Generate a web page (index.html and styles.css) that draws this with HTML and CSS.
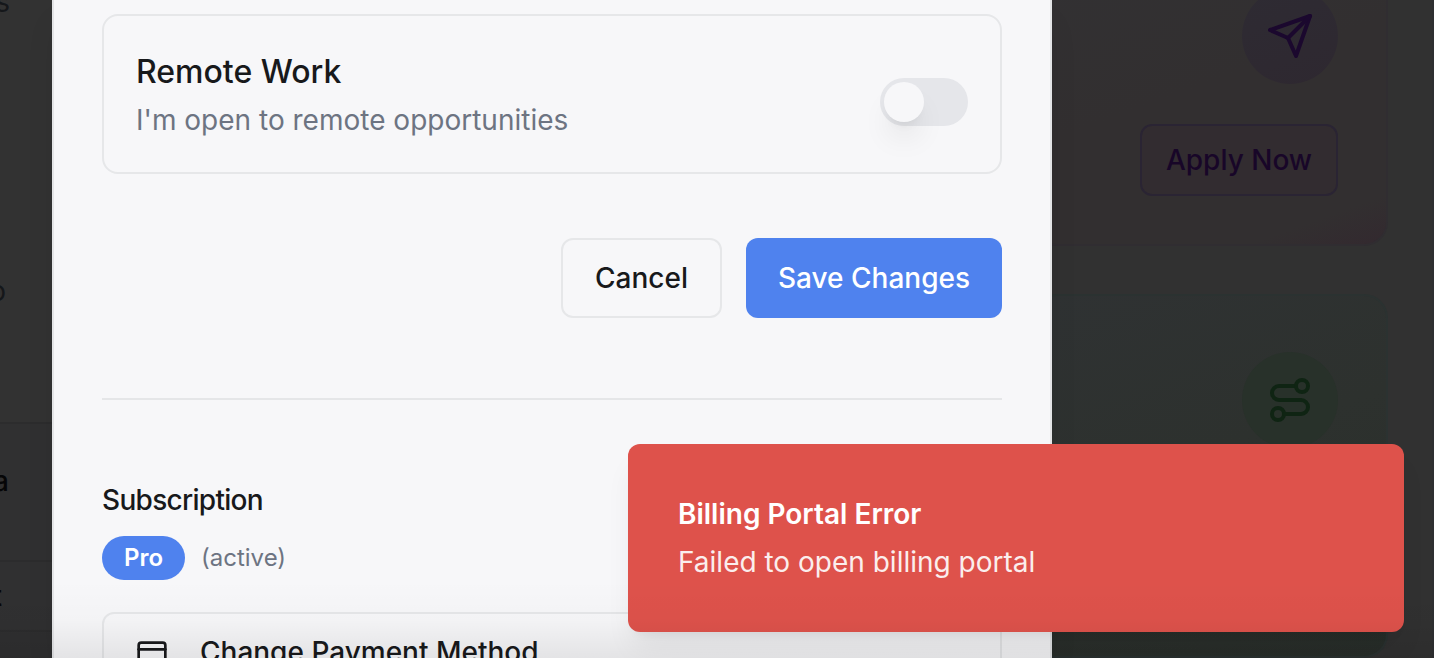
FILE: index.html
```html
<!DOCTYPE html>
<html lang="en">
<head>
<meta charset="utf-8">
<title>Settings</title>
<link rel="stylesheet" href="styles.css">
</head>
<body>
<div class="page">
  <aside class="side">
    <div class="side-row row-a"><span class="muted">s</span></div>
    <div class="side-row row-b"><span class="muted">o</span></div>
    <div class="side-row row-c"><span>a</span></div>
    <div class="side-row row-d"><span>t</span></div>
    <div class="side-row row-e"></div>
  </aside>
  <main class="cards">
    <section class="promo promo-purple">
      <div class="circle"><svg width="48" height="48" viewBox="0 0 24 24"><path d="m22 2-7 20-4-9-9-4Z"/><path d="M22 2 11 13"/></svg></div>
      <button class="apply">Apply Now</button>
    </section>
    <section class="promo promo-green">
      <div class="circle"><svg width="48" height="48" viewBox="0 0 24 24"><circle cx="6" cy="19" r="3"/><path d="M9 19h8.5a3.5 3.5 0 0 0 0-7h-11a3.5 3.5 0 0 1 0-7H15"/><circle cx="18" cy="5" r="3"/></svg></div>
    </section>
  </main>
</div>

<div class="dialog">
  <div class="setting">
    <div>
      <div class="setting-title">Remote Work</div>
      <div class="setting-text">I'm open to remote opportunities</div>
    </div>
    <div class="switch"><div class="thumb"></div></div>
  </div>
  <div class="actions">
    <button class="btn cancel">Cancel</button>
    <button class="btn save">Save Changes</button>
  </div>
  <div class="divider"></div>
  <h2 class="heading">Subscription</h2>
  <div class="plan"><span class="badge">Pro</span><span class="status">(active)</span></div>
  <div class="payment">
    <svg width="32" height="32" viewBox="0 0 24 24"><rect width="20" height="14" x="2" y="5" rx="2"/><path d="M2 10h20"/></svg>
    <span class="payment-label">Change Payment Method</span>
  </div>
</div>

<div class="toast">
  <div class="toast-title">Billing Portal Error</div>
  <div class="toast-text">Failed to open billing portal</div>
</div>
<div class="fade"></div>
</body>
</html>
```
FILE: styles.css
```css
* { box-sizing: border-box; }
html { overflow: hidden; }
body {
  margin: 0;
  height: 658px;
  position: relative;
  overflow: hidden;
  background: #313131;
  font-family: Inter, "Liberation Sans", sans-serif;
  color: #18191b;
}
button { font: inherit; margin: 0; }
svg { display: block; fill: none; stroke: currentColor; stroke-width: 2; stroke-linecap: round; stroke-linejoin: round; }

.page { display: flex; justify-content: space-between; height: 658px; overflow: hidden; }
.side { width: 60px; display: flex; flex-direction: column; font-size: 28px; font-weight: 500; color: #060607; }
.side-row { display: flex; align-items: center; border-bottom: 2px solid #2c2c2d; background: #323232; flex: none; }
.side-row span { width: 9px; display: flex; justify-content: flex-end; white-space: nowrap; }
.side-row .muted { color: #15171a; font-weight: 400; }
.row-a { height: 160px; margin-top: -78px; border: 0; }
.row-a .muted { width: 10px; }
.row-b { height: 342px; padding-top: 78px; }
.row-b .muted { width: 6px; }
.row-c { height: 138px; padding-bottom: 22px; background: #303031; }
.row-d { height: 70px; background: #303031; }
.row-d span { width: 2px; }
.row-e { height: 28px; border: 0; background: #2f2f30; }

.cards { width: 402px; padding-right: 44px; display: flex; flex-direction: column; gap: 48px; border-right: 2px solid #2e2f31; }
.promo { border: 2px solid; border-radius: 24px; padding: 0 48px; display: flex; flex-direction: column; align-items: flex-end; flex: none; }
.promo-purple { height: 286px; margin-top: -40px; padding-top: 26px; gap: 40px; border-color: #302d31; color: #1b082e; background: linear-gradient(160deg, #323133, #322f30 45%, #322f30 88%, #33292f); }
.promo-green { height: 364px; padding-top: 56px; border-color: #2b3231; color: #0f2413; background: linear-gradient(160deg, #2f3233, #2d312e 45%, #2a2f2b 85%, #282e2a); }
.circle { width: 96px; height: 96px; border-radius: 50%; display: flex; align-items: center; justify-content: center; }
.promo-purple .circle { background: linear-gradient(160deg, #2e2b33, #2e2830); }
.promo-green .circle { background: #28312a; }
.apply { width: 198px; height: 72px; padding: 0; border: 2px solid #2a2433; border-radius: 12px; background: #322c30; color: #180628; font-size: 28px; font-weight: 500; }

.dialog {
  position: absolute;
  left: 52px;
  top: 0;
  width: 1000px;
  height: 658px;
  overflow: hidden;
  padding: 14px 48px 0;
  border: 2px solid #e4e5e7;
  border-width: 0 2px;
  background: #f7f7f9;
  box-shadow: 0 20px 30px -6px rgba(0, 0, 0, .1);
}
.setting { height: 160px; display: flex; align-items: center; justify-content: space-between; padding: 0 32px; border: 2px solid #e6e7e9; border-radius: 16px; }
.setting-title { font-size: 32px; line-height: 48px; font-weight: 500; }
.setting-text { font-size: 28px; line-height: 40px; color: #6d7482; margin-top: 4px; }
.switch { width: 88px; height: 48px; margin-top: 16px; border-radius: 24px; padding: 4px; background: #e5e6ea; }
.thumb { width: 40px; height: 40px; border-radius: 50%; background: #f7f7f9; box-shadow: 0 20px 30px -6px rgba(0, 0, 0, .1), 0 8px 12px -8px rgba(0, 0, 0, .1); }
.actions { display: flex; justify-content: flex-end; gap: 24px; margin-top: 64px; }
.btn { height: 80px; padding: 0; border-radius: 12px; font-size: 28px; font-weight: 500; }
.cancel { width: 161px; border: 2px solid #e6e7e9; background: #f7f7f9; color: #18191b; }
.save { width: 256px; border: 0; background: #4f82ee; color: #fff; }
.divider { height: 2px; margin-top: 80px; background: #e5e6e8; }
.heading { margin: 80px 0 0; font-size: 28px; line-height: 40px; font-weight: 500; letter-spacing: -.7px; }
.plan { display: flex; align-items: center; gap: 16px; margin-top: 16px; }
.badge { width: 83px; height: 44px; padding-bottom: 2px; border-radius: 22px; display: flex; align-items: center; justify-content: center; background: #4f82ee; color: #fff; font-size: 24px; font-weight: 600; }
.status { font-size: 24px; line-height: 32px; color: #6d7482; }
.payment { height: 80px; display: flex; align-items: center; gap: 32px; margin-top: 32px; padding: 0 32px; border: 2px solid #e6e7e9; border-radius: 12px; }
.payment-label { font-size: 28px; font-weight: 500; }

.toast {
  position: absolute;
  left: 628px;
  top: 444px;
  width: 776px;
  height: 188px;
  padding: 50px 50px 0;
  border-radius: 12px;
  background: #de524b;
  color: #fff;
  box-shadow: 0 20px 30px -6px rgba(0, 0, 0, .07), 0 8px 12px -8px rgba(0, 0, 0, .08);
}
.toast-title { font-size: 28px; line-height: 40px; font-weight: 600; }
.toast-text { margin-top: 8px; font-size: 28px; line-height: 40px; opacity: .9; }
.fade { position: absolute; left: 0; right: 0; bottom: 0; height: 78px; background: linear-gradient(rgba(0, 0, 0, 0), rgba(0, 0, 0, .015) 50%, rgba(0, 0, 0, .08)); pointer-events: none; }
```
